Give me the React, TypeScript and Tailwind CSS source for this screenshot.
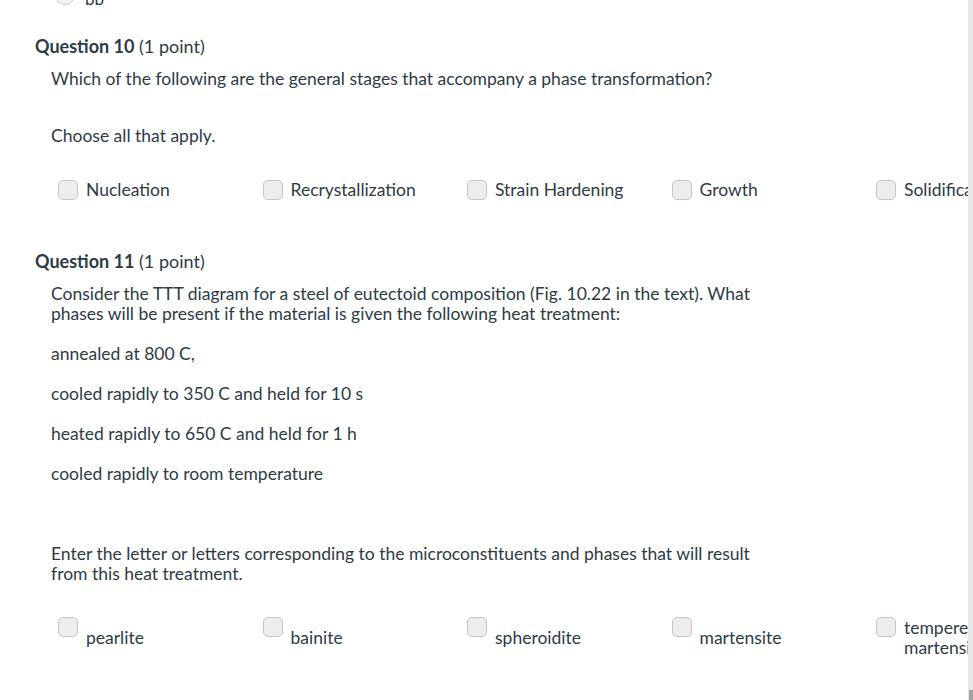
import React from 'react';

const stages = ['Nucleation', 'Recrystallization', 'Strain Hardening', 'Growth', 'Solidification'];
const phases = ['pearlite', 'bainite', 'spheroidite', 'martensite', 'tempered martensite'];

function Box({ className = '' }: { className?: string }) {
  return <span className={`block h-5 w-5 shrink-0 rounded-[5px] border border-[#c9c4c4] bg-[#efecec] ${className}`} />;
}

function Heading({ n }: { n: number }) {
  return (
    <h2 className="h-6 whitespace-nowrap text-[18px] leading-6">
      <span className="font-bold">Question {n}</span> (1 point)
    </h2>
  );
}

function App() {
  return (
    <div className="flex h-[700px] w-[973px] overflow-hidden bg-white font-['Lato','Open_Sans',sans-serif] text-[#2d3b45]">
      <div className="min-w-0 flex-1 overflow-hidden">
        {/* tail of the previous question */}
        <div className="flex h-[5px] items-end gap-[10px] overflow-hidden pl-[55px]">
          <span className="block h-5 w-5 shrink-0 rounded-full border border-[#cfcaca] bg-[#f3f1f1]" />
          <span className="mb-[1px] whitespace-nowrap text-[17px] leading-[10px]">pp</span>
        </div>

        <section className="mt-[29px] pl-[35px]">
          <Heading n={10} />
          <div className="pl-4 text-[17.5px]">
            <p className="mt-[9px] h-6 whitespace-nowrap leading-6">
              Which of the following are the general stages that accompany a phase transformation?
            </p>
            <p className="mt-[33px] h-6 leading-6">Choose all that apply.</p>
            <div className="mt-[30px] flex pl-[7px]">
              {stages.map((s) => (
                <label key={s} className="flex h-6 w-[204.5px] shrink-0 items-center gap-2">
                  <Box />
                  <span className="whitespace-nowrap leading-6">{s}</span>
                </label>
              ))}
            </div>
          </div>
        </section>

        <section className="mt-[47px] pl-[35px]">
          <Heading n={11} />
          <div className="pl-4 text-[17.5px] leading-5">
            <p className="mt-[11px] whitespace-nowrap">
              Consider the TTT diagram for a steel of eutectoid composition (Fig. 10.22 in the text). What
              <br />
              phases will be present if the material is given the following heat treatment:
            </p>
            <p className="mt-5">annealed at 800 C,</p>
            <p className="mt-5">cooled rapidly to 350 C and held for 10 s</p>
            <p className="mt-5">heated rapidly to 650 C and held for 1 h</p>
            <p className="mt-5">cooled rapidly to room temperature</p>
            <p className="mt-[60px] whitespace-nowrap">
              Enter the letter or letters corresponding to the microconstituents and phases that will result
              <br />
              from this heat treatment.
            </p>
            <div className="mt-[34px] flex pl-[7px]">
              {phases.map((p) => (
                <label key={p} className="flex h-10 w-[204.5px] shrink-0 items-center gap-2">
                  <Box className="-mt-[1px] self-start" />
                  <span className="w-[110px] leading-5">{p}</span>
                </label>
              ))}
            </div>
          </div>
        </section>
      </div>

      <div className="flex w-[5px] shrink-0 flex-col justify-end bg-[#e8e8e8]">
        <div className="ml-[1px] h-[10px] bg-[#a3a3a3]" />
      </div>
    </div>
  );
}

export default App;
